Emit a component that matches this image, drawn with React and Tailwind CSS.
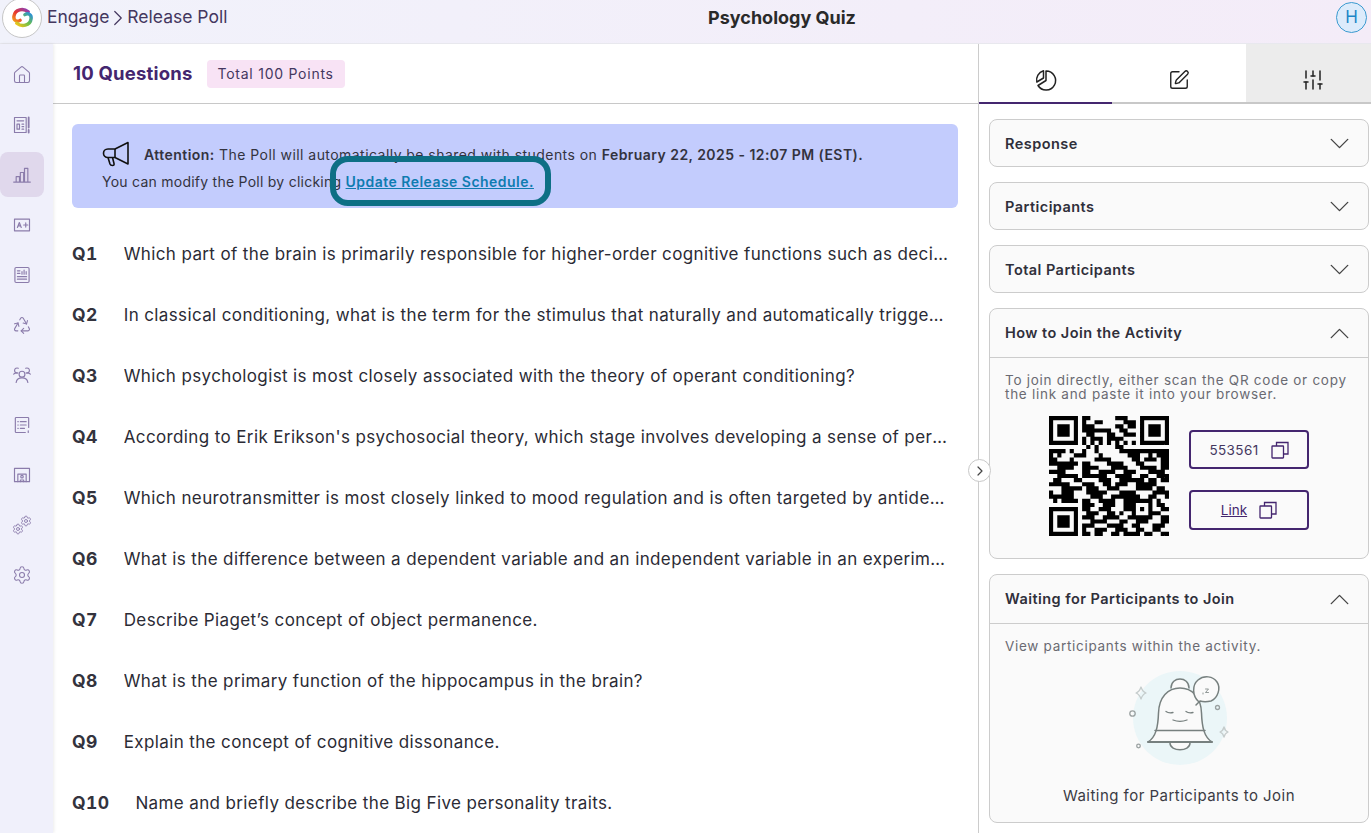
import React from 'react';
import { ChevronDown, ChevronRight, ChevronUp, Recycle, Settings, SlidersVertical, SquarePen, House } from 'lucide-react';

const QUESTIONS = [
  "Which part of the brain is primarily responsible for higher-order cognitive functions such as decision-making and planning?",
  "In classical conditioning, what is the term for the stimulus that naturally and automatically triggers a response without learning?",
  "Which psychologist is most closely associated with the theory of operant conditioning?",
  "According to Erik Erikson's psychosocial theory, which stage involves developing a sense of personal identity during adolescence?",
  "Which neurotransmitter is most closely linked to mood regulation and is often targeted by antidepressant medications?",
  "What is the difference between a dependent variable and an independent variable in an experimental study?",
  "Describe Piaget’s concept of object permanence.",
  "What is the primary function of the hippocampus in the brain?",
  "Explain the concept of cognitive dissonance.",
  "Name and briefly describe the Big Five personality traits.",
];

const QR_ROWS = [
  '11111110110000001110001111111',
  '10000010100110000011101000001',
  '10111010111000001101101011101',
  '10111010111111100110001011101',
  '10111010011000110011101011101',
  '10000010101110111100001000001',
  '11111110101010101010101111111',
  '00000000010100001100000000000',
  '11110100100100000111111111111',
  '10100011100010000001110010111',
  '11000100000111100000110111011',
  '11111110110000111100011000011',
  '00111100111100011110001111011',
  '11110000110011110011100011110',
  '00111110111111001111001100111',
  '01100011000011100111111011011',
  '11111000111001101110011111000',
  '00011111011100111000011110110',
  '10011100011111000111100001111',
  '11111100001110011111110011001',
  '01011110110011110011111110100',
  '00000000111001110011100010110',
  '11111110110011100011101010011',
  '10000010011100110100100011100',
  '10111010111001111001111110011',
  '10111010001111000110011100011',
  '10111010111000111100110001110',
  '10000010100111001110011001100',
  '11111110110110011011110110011',
];

function QrCode() {
  const d = QR_ROWS.map((row, y) =>
    row.split('').map((cell, x) => (cell === '1' ? `M${x} ${y}h1v1h-1z` : '')).join('')
  ).join('');
  return (
    <svg viewBox="0 0 29 29" className="w-[120px] h-[120px] shrink-0">
      <path d={d} fill="#000" />
    </svg>
  );
}

const Svg = ({ children, className = 'w-5 h-5' }) => (
  <svg viewBox="0 0 24 24" fill="none" stroke="currentColor" strokeWidth="1.4" strokeLinecap="round" strokeLinejoin="round" className={className}>
    {children}
  </svg>
);

const NewsIcon = () => (
  <Svg>
    <path d="M3 3h14v18H3zM6 7h8M6 11h3v6H6zM12 11h2M12 14h2M12 17h2" />
    <path d="M20 3v12M20 18v3" strokeWidth="2.2" />
  </Svg>
);
const BarsIcon = () => (
  <Svg>
    <path d="M2 20.5h20M5 20v-6h4v6M10 20V9h4v11M15 20V4h4v16" />
  </Svg>
);
const GradeIcon = () => (
  <Svg>
    <path d="M3 5h18v14H3z" />
    <path d="M6.5 15l2.3-6 2.3 6M7.4 13h2.8M14 12h5M16.5 9.5v5" />
  </Svg>
);
const ReportIcon = () => (
  <Svg>
    <rect x="3.5" y="3" width="17" height="18" rx="1.5" />
    <path d="M6.5 7h3M6.5 10h3M12 11V8M14.5 11V6M17 11V8M6.5 14h11M6.5 17h11" />
  </Svg>
);
const GroupIcon = () => (
  <Svg>
    <circle cx="12" cy="11" r="3.5" />
    <path d="M5 21c.5-3.5 3-5.5 7-5.5s6.500 2 7 5.500" />
    <path d="M7 9.500A3 3 0 1 1 7.500 4M16.500 4A3 3 0 1 1 17 9.500M2 11c1-1 2-1.500 4-1.500M22 11c-1-1-2-1.500-4-1.500" />
  </Svg>
);
const QuizListIcon = () => (
  <Svg>
    <path d="M20 15V4a1 1 0 0 0-1-1H5a1 1 0 0 0-1 1v16a1 1 0 0 0 1 1h11" />
    <path d="M7 8h.5M10 8h7M7 12h.5M10 12h7M7 16h.5M10 16h5M19.500 19v2" />
  </Svg>
);
const BoardIcon = () => (
  <Svg>
    <path d="M3 4h18v16H3z" />
    <path d="M7 20v-9h10v9M10 20v-2h4v2" />
    <circle cx="12" cy="14" r="1.500" />
  </Svg>
);
const GearsIcon = () => (
  <span className="relative block w-5 h-5">
    <Settings className="absolute right-0 top-0 w-[12px] h-[12px]" strokeWidth={1.800} />
    <Settings className="absolute left-0 bottom-0 w-[12px] h-[12px]" strokeWidth={1.800} />
  </span>
);

const NAV = [
  { icon: <House className="w-5 h-5" strokeWidth={1.3} /> },
  { icon: <NewsIcon /> },
  { icon: <BarsIcon />, active: true },
  { icon: <GradeIcon /> },
  { icon: <ReportIcon /> },
  { icon: <Recycle className="w-5 h-5" strokeWidth={1.3} /> },
  { icon: <GroupIcon /> },
  { icon: <QuizListIcon /> },
  { icon: <BoardIcon /> },
  { icon: <GearsIcon /> },
  { icon: <Settings className="w-5 h-5" strokeWidth={1.3} /> },
];

function Logo() {
  return (
    <div className="w-10 h-10 rounded-full bg-white border border-[#c6c6c6] flex items-center justify-center shrink-0">
      <svg viewBox="0 0 24 24" className="w-[23px] h-[23px]" fill="none" strokeWidth="3.600" strokeLinecap="round">
        <defs>
          <linearGradient id="logoTop" x1="0" y1="1" x2="1" y2="0">
            <stop offset="0" stopColor="#f39a1d" />
            <stop offset="0.45" stopColor="#e8352e" />
            <stop offset="1" stopColor="#8b3fb8" />
          </linearGradient>
          <linearGradient id="logoBottom" x1="0" y1="1" x2="1" y2="0">
            <stop offset="0" stopColor="#f5c518" />
            <stop offset="0.5" stopColor="#6cc04a" />
            <stop offset="1" stopColor="#2a8fd8" />
          </linearGradient>
        </defs>
        <path d="M18 6C13 2 4 3 3 11C2.500 15 6 17 9.500 15" stroke="url(#logoTop)" />
        <path d="M6 18C11 22 20 21 21 13C21.500 9 18 7 14.500 9" stroke="url(#logoBottom)" />
      </svg>
    </div>
  );
}

function MegaphoneIcon() {
  return (
    <svg viewBox="0 0 28 26" className="w-[28px] h-[26px] shrink-0 mr-[14px]" fill="none" stroke="#111" strokeWidth="1.600" strokeLinejoin="round">
      <path d="M13 8L26 1.500V23L13 16.500H6C3 16.500 1.500 14.500 1.500 12.250C1.500 10 3 8 6 8Z" />
      <path d="M13 8V16.500M6 16.500L8 23Q8.500 24.500 10.500 24.500Q12.500 24.500 12 22.500L10.500 16.500" />
    </svg>
  );
}

function PieIcon() {
  return (
    <svg viewBox="0 0 24 24" className="w-[24px] h-[24px]" fill="none" stroke="#222" strokeWidth="1.500" strokeLinejoin="round">
      <path d="M12 3a9.500 9.500 0 1 1-8 14.500l8-5z" />
      <path d="M9.500 2.800V10L2.800 14A9.500 9.500 0 0 1 9.500 2.800z" />
    </svg>
  );
}

function CopyIcon() {
  return (
    <svg viewBox="0 0 18 18" className="w-[18px] h-[18px]" fill="none" stroke="#44266f" strokeWidth="1.300">
      <rect x="1" y="5" width="11.500" height="12" rx="0.500" />
      <path d="M5.500 5V1.500h11.500V13h-4.500" />
    </svg>
  );
}

function BellArt() {
  return (
    <svg viewBox="0 0 150 110" className="w-[150px] h-[110px]" fill="none" stroke="#77807f" strokeWidth="1.300" strokeLinecap="round" strokeLinejoin="round">
      <circle cx="80" cy="57" r="47" fill="#ebf6f8" stroke="none" />
      <path d="M71 27c0-12 18-12 18 0" fill="#fafafa" strokeWidth="1.500" />
      <path d="M70 82c0 9 20 9 20 0" fill="#fafafa" strokeWidth="1.500" />
      <path d="M48 81C56 76 58 66 58.500 52C59 36 68 27 80 27C92 27 101 36 101.500 52C102 66 104 76 112 81Z" fill="#fafafa" strokeWidth="1.500" />
      <path d="M55 69.500H105" strokeWidth="1.500" />
      <path d="M48 81H112" strokeWidth="1.800" />
      <path d="M66 50.500c2 1.500 5 1.500 7 1M86 50.500c2 1.500 5 1.500 7 1M73 59c4 1.500 10 1.500 14 0" />
      <path d="M99 41C92 35 92 24 98 19C104 14 113 15 117 21C121 27 118 37 111 40C107 41 103 41 100 40L96 44Z" fill="#fafafa" strokeWidth="1.500" />
      <path d="M103 33v-1M105.500 28h3l-3 3.500h3" strokeWidth="0.800" />
      <path d="M41 26c1 3 2 5 5 6c-3 1-4 3-5 6c-1-3-2-5-5-6c3-1 4-3 5-6z" stroke="#c5cccc" />
      <path d="M124 66c.5 2 1.500 4 4 5c-2.500 1-3.500 3-4 5c-.5-2-1.500-4-4-5c2.500-1 3.500-3 4-5z" stroke="#c5cccc" />
      <circle cx="32.500" cy="52.500" r="2.700" stroke="#9aa1a1" />
      <circle cx="117.500" cy="46.500" r="2" stroke="#9aa1a1" />
      <circle cx="38.500" cy="85" r="1.800" stroke="#9aa1a1" />
    </svg>
  );
}

function Accordion({ title, open, children }) {
  return (
    <div className="rounded-lg border border-[#cccccc] bg-[#fafafa]">
      <div className={`flex items-center justify-between pl-[15px] pr-[12px] ${open ? 'h-[49px] border-b border-[#cccccc]' : 'h-[46px]'}`}>
        <span className={`text-[14.500px] font-semibold tracking-[0.45px] text-[#2f2f3a] ${open ? '' : 'pt-[2px]'}`}>{title}</span>
        {open
          ? <ChevronUp className="w-[33px] h-[33px] text-[#444]" strokeWidth={1} />
          : <ChevronDown className="w-[33px] h-[33px] text-[#444]" strokeWidth={1} />}
      </div>
      {children}
    </div>
  );
}

export default function App() {
  return (
    <div className="w-[1371px] h-[833px] overflow-hidden flex flex-col bg-white font-['Inter',sans-serif] text-[#2b2b35]">
      <header className="h-[44px] shrink-0 flex items-center pl-[2px] pr-[4px] pb-[8px] bg-gradient-to-r from-[#f1f2fb] to-[#f4ecf8] border-b border-[#e8e8ee]">
        <Logo />
        <div className="ml-[5px] w-[320px] flex items-center text-[17.500px] text-[#44375f]">
          Engage
          <ChevronRight className="w-[26px] h-[26px] -mx-[4px]" strokeWidth={1.100} />
          Release Poll
        </div>
        <div className="ml-[315px] w-[200px] text-center text-[18px] font-bold text-[#2a2a2a]">Psychology Quiz</div>
        <div className="ml-auto w-[31px] h-[31px] rounded-full border border-[#3b9ad0] bg-[#dcebfb] text-[#1c86c7] text-[17px] flex items-center justify-center">H</div>
      </header>

      <div className="flex-1 flex min-h-0">
        <nav className="w-[53px] shrink-0 bg-[#f0f0fb] shadow-[1px_0_3px_rgba(0,0,0,0.08)] pt-[6px] z-10">
          {NAV.map((item, i) => (
            <div key={i} className={`w-[44px] h-[50px] flex items-center justify-center text-[#8b7cab] ${item.active ? 'relative' : ''}`}>
              {item.active && <div className="absolute left-0 top-[2px] w-[44px] h-[45px] rounded-lg bg-[#e0d8ec]" />}
              <span className="relative">{item.icon}</span>
            </div>
          ))}
        </nav>

        <main className="w-[926px] shrink-0 border-r border-[#cccccc] flex flex-col">
          <div className="h-[60px] shrink-0 border-b border-[#c8c8c8] flex items-center pl-[20px]">
            <h1 className="text-[18.500px] font-bold text-[#44266f] tracking-[0.2px]">10 Questions</h1>
            <span className="ml-[14px] h-[28px] px-[11px] rounded bg-[#f8e3f5] flex items-center text-[14px] text-[#44375f] tracking-[0.75px]">Total 100 Points</span>
          </div>

          <div className="pl-[19px] pr-[20px] pt-[20px]">
            <div className="h-[84px] rounded-md bg-[#c3ccfd] pl-[30px] pt-[15px] text-[14px] text-[#333340] tracking-[0.45px]">
              <div className="flex items-center h-[30px]">
                <MegaphoneIcon />
                <span><b className="font-semibold">Attention:</b> The Poll will automatically be shared with students on <b className="font-semibold">February 22, 2025 - 12:07 PM (EST).</b></span>
              </div>
              <div className="mt-[2px] tracking-[0.25px]">
                You can modify the Poll by clicking{' '}
                <span className="relative font-semibold text-[#0f7cb0] underline tracking-[0.47px]">
                  Update Release Schedule.
                  <span className="absolute -left-[16px] -right-[17px] -top-[17px] -bottom-[16px] rounded-[18px] border-[6px] border-[#0d6f85]" />
                </span>
              </div>
            </div>

            <ul className="mt-[16px]">
              {QUESTIONS.map((q, i) => (
                <li key={i} className="h-[61px] flex items-center text-[17px] tracking-[0.38px] pr-[10px]">
                  <b className="font-bold shrink-0 text-[#33333d] text-[17.500px] tabular-nums mr-[26px]">Q{i + 1}</b>
                  <span className="truncate">{q}</span>
                </li>
              ))}
            </ul>
          </div>
        </main>

        <aside className="flex-1 relative min-w-0">
          <div className="absolute -left-[11px] top-[415px] w-[23px] h-[23px] rounded-full bg-white border border-[#c8c8c8] flex items-center justify-center">
            <ChevronRight className="w-4 h-4 text-[#444]" strokeWidth={1.800} />
          </div>

          <div className="flex h-[60px]">
            <div className="w-[133px] shrink-0 pt-[13px] flex items-center justify-center border-b-2 border-[#44266f]"><PieIcon /></div>
            <div className="w-[134px] shrink-0 pt-[13px] flex items-center justify-center border-b-2 border-[#c8c8c8] text-[#222]"><SquarePen className="w-[22px] h-[22px]" strokeWidth={1.500} /></div>
            <div className="w-[133px] shrink-0 pt-[13px] flex items-center justify-center border-b-2 border-[#c8c8c8] bg-[#ececec] text-[#222]"><SlidersVertical className="w-[24px] h-[24px]" strokeWidth={1.500} /></div>
          </div>

          <div className="pl-[10px] pr-[2px] pt-[15px] flex flex-col gap-[15px]">
            <Accordion title="Response" />
            <Accordion title="Participants" />
            <Accordion title="Total Participants" />
            <Accordion title="How to Join the Activity" open>
              <div className="h-[200px] px-[15px] pt-[15px] text-[13.500px] leading-[14px] tracking-[0.73px] text-[#6a6a72]">
                <p>To join directly, either scan the QR code or copy the link and paste it into your browser.</p>
                <div className="mt-[15px] ml-[44px] flex items-center">
                  <QrCode />
                  <div className="ml-[20px] mt-[8px] flex flex-col gap-[21px]">
                    <div className="w-[120px] h-[39px] rounded border-2 border-[#44266f] flex items-center justify-center gap-[12px] text-[#44375f] text-[13.500px] tracking-[0.4px]">553561<CopyIcon /></div>
                    <div className="w-[120px] h-[40px] rounded border-2 border-[#44266f] flex items-center justify-center gap-[12px] text-[#44266f] text-[13.500px] tracking-normal"><span className="underline">Link</span><CopyIcon /></div>
                  </div>
                </div>
              </div>
            </Accordion>
            <Accordion title="Waiting for Participants to Join" open>
              <div className="h-[198px] px-[15px] pt-[14px] text-[13.500px] tracking-[0.7px] text-[#6a6a72]">
                <p className="leading-[16px]">View participants within the activity.</p>
                <div className="flex justify-center pr-[8px] mt-[7px]"><BellArt /></div>
                <p className="text-center text-[15px] tracking-[0.47px] text-[#3a3a44] mt-[14px]">Waiting for Participants to Join</p>
              </div>
            </Accordion>
          </div>
        </aside>
      </div>
    </div>
  );
}
